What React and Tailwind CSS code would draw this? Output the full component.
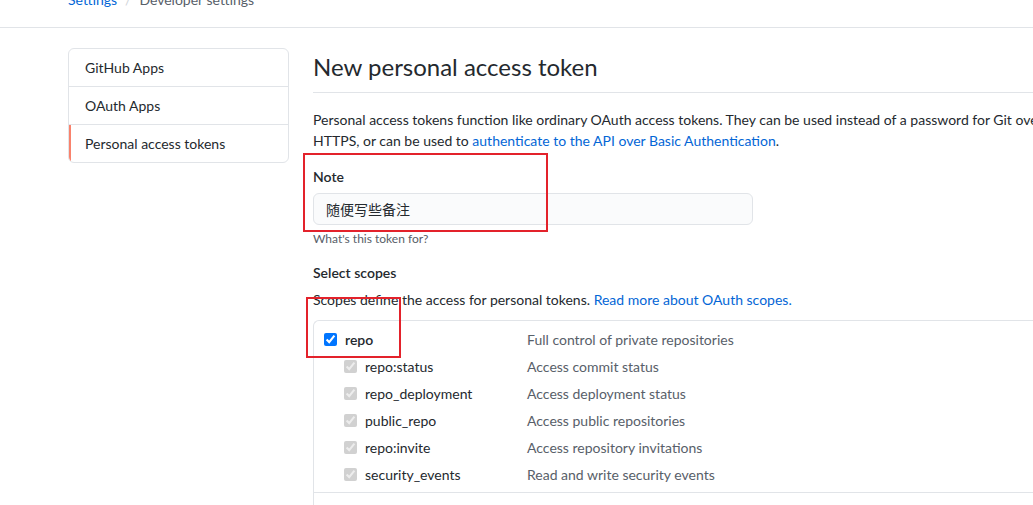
import React from "react";

const scopes = [
  ["repo:status", "Access commit status"],
  ["repo_deployment", "Access deployment status"],
  ["public_repo", "Access public repositories"],
  ["repo:invite", "Access repository invitations"],
  ["security_events", "Read and write security events"],
];

export default function App() {
  return (
    <div className="w-[1033px] h-[505px] overflow-hidden bg-white text-[#24292e] font-['Lato','Noto_Sans_CJK_SC',sans-serif] text-[14px] leading-[21px]">
      <div className="flow-root h-[28px] border-b border-[#e1e4e8] pl-[68px]">
        <div className="-mt-[11px] whitespace-nowrap">
          <a className="text-[#0366d6]">Settings</a>
          <span className="text-[#d1d5da] mx-[8px]">/</span>
          <span className="text-[#586069]">Developer settings</span>
        </div>
      </div>
      <div className="flex gap-[24px] pl-[68px] pt-[20px] w-[1300px]">
        <nav className="w-[221px] shrink-0 self-start border border-[#e1e4e8] rounded-[6px] overflow-hidden">
          <div className="px-[16px] py-[8px] border-b border-[#e1e4e8]">GitHub Apps</div>
          <div className="px-[16px] py-[8px] border-b border-[#e1e4e8]">OAuth Apps</div>
          <div className="pl-[14px] pr-[16px] py-[8px] border-l-2 border-[#f9826c]">Personal access tokens</div>
        </nav>
        <main className="relative w-[900px] shrink-0">
          <div className="pt-[4px] pb-[10px] border-b border-[#e1e4e8]">
            <h2 className="text-[24px] leading-[30px] font-normal">New personal access token</h2>
          </div>
          <p className="mt-[16px] whitespace-nowrap">
            Personal access tokens function like ordinary OAuth access tokens. They can be used instead of a password for Git over
            <br />
            HTTPS, or can be used to <a className="text-[#0366d6]">authenticate to the API over Basic Authentication</a>.
          </p>
          <div className="mt-[15px] font-semibold">Note</div>
          <div className="mt-[6px] w-[440px] h-[32px] px-[12px] flex items-center bg-[#fafbfc] border border-[#e1e4e8] rounded-[6px]">
            随便写些备注
          </div>
          <div className="mt-[5px] text-[12px] leading-[18px] text-[#586069]">What's this token for?</div>
          <div className="mt-[14px] font-semibold">Select scopes</div>
          <p className="mt-[6px] whitespace-nowrap">
            Scopes define the access for personal tokens. <a className="text-[#0366d6]">Read more about OAuth scopes.</a>
          </p>
          <div className="mt-[10px] border-t border-l border-[#e1e4e8] rounded-tl-[6px]">
            <div className="pt-[5px] pb-[4px] border-b border-[#e1e4e8]">
              <div className="flex items-center h-[27px]">
                <div className="w-[213px] pl-[10px] flex items-center gap-[8px]">
                  <input type="checkbox" checked readOnly className="w-[13px] h-[13px]" />
                  <span className="font-semibold">repo</span>
                </div>
                <span className="text-[#586069]">Full control of private repositories</span>
              </div>
              {scopes.map(([n, d]) => (
                <div key={n} className="flex items-center h-[27px]">
                  <div className="w-[213px] pl-[30px] flex items-center gap-[8px]">
                    <input type="checkbox" checked disabled readOnly className="w-[13px] h-[13px]" />
                    <span>{n}</span>
                  </div>
                  <span className="text-[#586069]">{d}</span>
                </div>
              ))}
            </div>
            <div className="h-[40px]"></div>
          </div>
          <div className="absolute left-[-10px] top-[105px] w-[245px] h-[79px] border-2 border-[#e3222b]"></div>
          <div className="absolute left-[-7px] top-[249px] w-[95px] h-[61px] border-2 border-[#e3222b]"></div>
        </main>
      </div>
    </div>
  );
}
